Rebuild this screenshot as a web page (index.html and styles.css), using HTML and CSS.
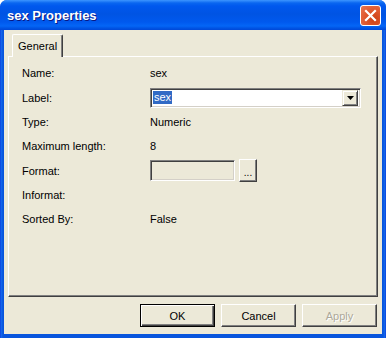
FILE: index.html
```html
<!DOCTYPE html>
<html>
<head>
<meta charset="utf-8">
<link rel="stylesheet" href="styles.css">
</head>
<body>
<div class="window">
  <div class="titlebar">
    <span class="title">sex Properties</span>
    <div class="close">
      <svg width="13" height="13" viewBox="0 0 13 13"><path d="M2 2 L11 11 M11 2 L2 11" stroke="#fff" stroke-width="2.2" stroke-linecap="square"/></svg>
    </div>
  </div>
  <div class="client">
    <div class="tabs"><div class="tab">General</div></div>
    <div class="panel">
      <div class="grid">
        <span class="lbl">Name:</span><span class="val">sex</span>
        <span class="lbl">Label:</span>
        <div class="val"><div class="combo"><span class="sel">sex</span><div class="drop"><svg width="7" height="4" viewBox="0 0 7 4"><path d="M0 0 H7 L3.5 4 Z" fill="#000"/></svg></div></div></div>
        <span class="lbl">Type:</span><span class="val">Numeric</span>
        <span class="lbl">Maximum length:</span><span class="val">8</span>
        <span class="lbl">Format:</span>
        <div class="val fmt"><div class="textbox"></div><div class="dots">...</div></div>
        <span class="lbl">Informat:</span><span class="val"></span>
        <span class="lbl">Sorted By:</span><span class="val">False</span>
      </div>
    </div>
    <div class="buttons">
      <div class="btn default">OK</div>
      <div class="btn">Cancel</div>
      <div class="btn disabled">Apply</div>
    </div>
  </div>
</div>
</body>
</html>
```
FILE: styles.css
```css
* { box-sizing: border-box; }
html, body { margin: 0; padding: 0; background: #fff; }
body { width: 386px; height: 338px; overflow: hidden; font-family: "Liberation Sans", Arial, sans-serif; font-size: 11px; color: #000; }

.window {
  width: 386px; height: 338px;
  background: linear-gradient(to right, #0831D9 0, #166AEE 1px, #0855DD 3px, #0855DD 383px, #166AEE 385px, #0831D9 386px);
  border-radius: 7px 7px 0 0;
  display: flex; flex-direction: column;
  padding: 0 4px 4px 4px;
  position: relative;
}
.titlebar {
  height: 30px;
  margin: 0 -4px;
  border-radius: 7px 7px 0 0;
  background: linear-gradient(to bottom, #3D95FF 0, #0A66F0 3px, #0058EE 6px, #0054E3 14px, #0059EE 22px, #0466F6 26px, #0055E5 28px, #0048D8 30px);
  display: flex; align-items: center; justify-content: space-between;
  padding: 0 5px 0 7px;
}
.title {
  color: #fff; font-weight: bold; font-size: 13px;
  font-family: "Liberation Sans", Arial, sans-serif;
  text-shadow: 1px 1px #0A1883;
  margin-top: 1px;
}
.close {
  width: 21px; height: 21px;
  border: 1px solid #fff; border-radius: 3px;
  background: radial-gradient(circle at 70% 70%, #CC4014 0, #E0582E 50%, #E87652 100%);
  display: flex; align-items: center; justify-content: center;
  margin-top: 1px;
}
.client {
  flex: 1;
  background: #ECE9D8;
  display: flex; flex-direction: column;
  padding: 4px 4px 0 4px;
}
.tabs { display: flex; padding-left: 4px; height: 22px; position: relative; z-index: 1; }
.tab {
  width: 51px; height: 23px;
  background: #ECE9D8;
  border-top: 1px solid #fff; border-left: 1px solid #fff;
  border-right: 1px solid #404040;
  box-shadow: inset -1px 0 #808080;
  border-radius: 2px 2px 0 0;
  padding: 5px 0 0 5px;
  margin-top: 0;
}
.panel {
  height: 241px;
  border-top: 1px solid #fff; border-left: 1px solid #fff;
  border-right: 1px solid #404040; border-bottom: 1px solid #404040;
  box-shadow: inset -1px -1px #808080;
  padding: 4px 0 0 13px;
}
.grid {
  display: grid;
  grid-template-columns: 128px 1fr;
  grid-template-rows: 24px 25px 24px 24px 25px 24px 23px;
  align-items: center;
}
.val { display: flex; align-items: center; }
.combo {
  width: 211px; height: 20px;
  background: #fff;
  border: 1px solid; border-color: #808080 #fff #fff #808080;
  box-shadow: inset 1px 1px #404040, inset -1px -1px #D4D0C8;
  display: flex; align-items: center; justify-content: space-between;
  padding: 0 2px 0 2px;
}
.sel { background: #316AC5; color: #fff; padding: 0 1px; line-height: 13px; }
.drop {
  width: 16px; height: 16px;
  background: #ECE9D8;
  border: 1px solid; border-color: #ECE9D8 #404040 #404040 #ECE9D8;
  box-shadow: inset 1px 1px #fff, inset -1px -1px #808080;
  display: flex; align-items: center; justify-content: center;
}
.fmt { gap: 4px; }
.textbox {
  width: 85px; height: 21px;
  background: #ECE9D8;
  border: 1px solid; border-color: #808080 #fff #fff #808080;
  box-shadow: inset 1px 1px #404040, inset -1px -1px #D4D0C8;
}
.dots {
  width: 18px; height: 23px;
  border: 1px solid; border-color: #fff #404040 #404040 #fff;
  box-shadow: inset -1px -1px #808080;
  display: flex; align-items: center; justify-content: center;
  padding-top: 3px;
  font-size: 10px;
}
.buttons {
  display: flex; justify-content: flex-end; gap: 6px;
  padding-top: 7px; padding-right: 1px;
}
.btn {
  width: 75px; height: 23px;
  border: 1px solid; border-color: #fff #404040 #404040 #fff;
  box-shadow: inset -1px -1px #808080;
  display: flex; align-items: center; justify-content: center;
}
.btn.default {
  border: 1px solid #000;
  box-shadow: inset 1px 1px #fff, inset -1px -1px #404040, inset -2px -2px #808080;
}
.btn.disabled { color: #ACA899; text-shadow: 1px 1px #fff; }
```
